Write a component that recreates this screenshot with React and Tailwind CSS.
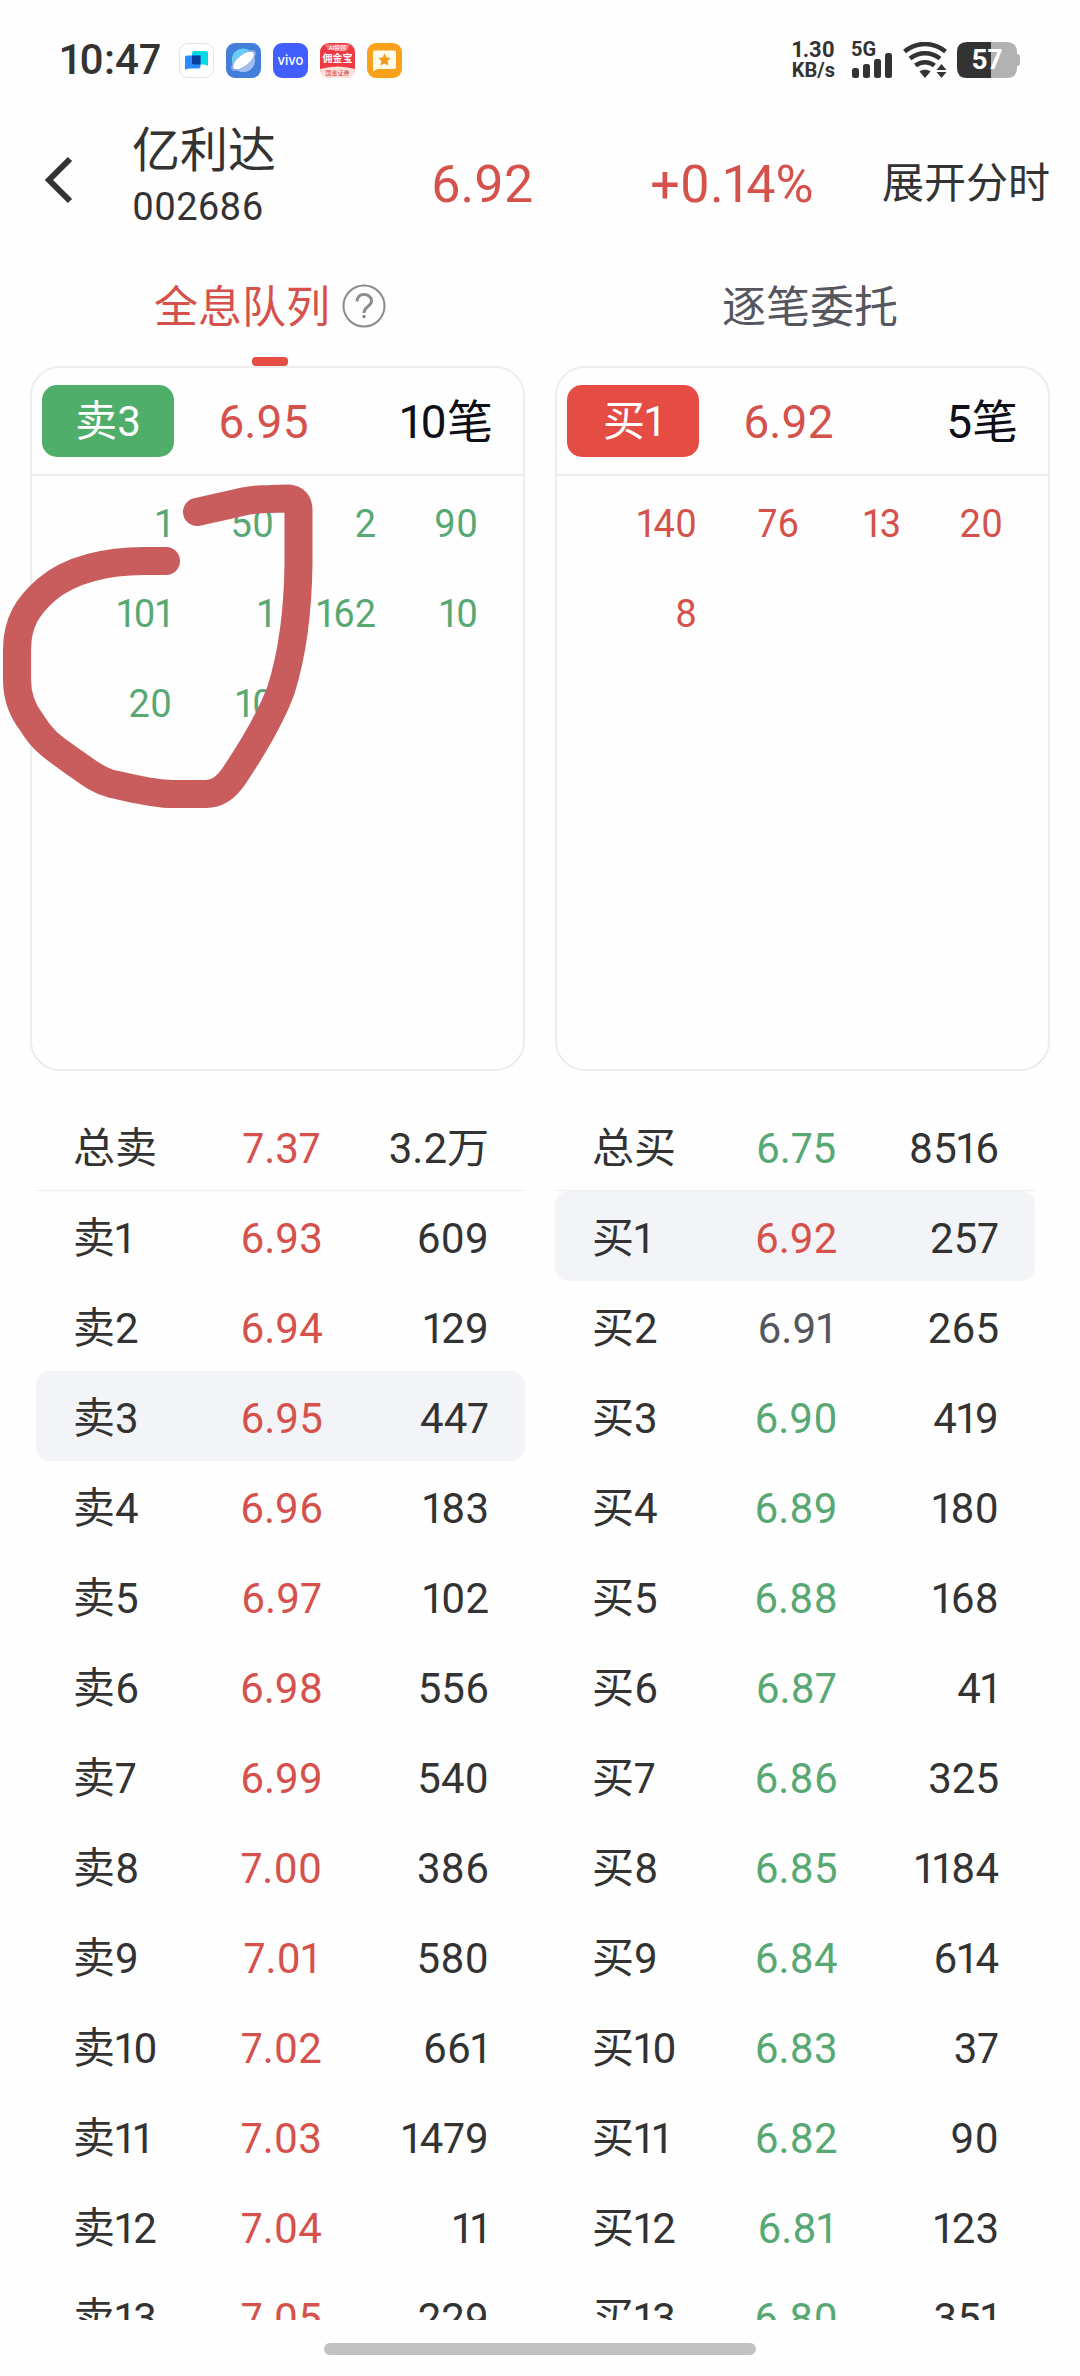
import { useState } from "react";

const RED = "text-[#d5524c]";
const GREEN = "text-[#57a873]";
const GRAY = "text-[#55565e]";

const sellQueue = [1, 50, 2, 90, 101, 1, 162, 10, 20, 10];
const buyQueue = [140, 76, 13, 20, 8];

const sells = [
  ["总卖", "7.37", "3.2万"],
  ["卖1", "6.93", "609"],
  ["卖2", "6.94", "129"],
  ["卖3", "6.95", "447"],
  ["卖4", "6.96", "183"],
  ["卖5", "6.97", "102"],
  ["卖6", "6.98", "556"],
  ["卖7", "6.99", "540"],
  ["卖8", "7.00", "386"],
  ["卖9", "7.01", "580"],
  ["卖10", "7.02", "661"],
  ["卖11", "7.03", "1479"],
  ["卖12", "7.04", "11"],
  ["卖13", "7.05", "229"],
];

const buys = [
  ["总买", "6.75", "8516"],
  ["买1", "6.92", "257"],
  ["买2", "6.91", "265"],
  ["买3", "6.90", "419"],
  ["买4", "6.89", "180"],
  ["买5", "6.88", "168"],
  ["买6", "6.87", "41"],
  ["买7", "6.86", "325"],
  ["买8", "6.85", "1184"],
  ["买9", "6.84", "614"],
  ["买10", "6.83", "37"],
  ["买11", "6.82", "90"],
  ["买12", "6.81", "123"],
  ["买13", "6.80", "351"],
];

// yesterday's close, prices are coloured against it
const PREV_CLOSE = 6.91;

function tone(price) {
  const p = Number(price);
  if (p > PREV_CLOSE) return RED;
  if (p < PREV_CLOSE) return GREEN;
  return GRAY;
}

export default function App() {
  const [tab, setTab] = useState("queue");

  return (
    <div className="h-screen flex flex-col overflow-hidden bg-[#fefefe] text-[#333333] proportional-nums font-['Roboto','Noto_Sans_CJK_SC',sans-serif]">
      <StatusBar />
      <Header />

      <div role="tablist" className="shrink-0 grid grid-cols-2 h-[120px]">
        <Tab active={tab === "queue"} onClick={() => setTab("queue")}>
          <span className="pt-[4px]">全息队列</span>
          <HelpIcon />
        </Tab>
        <Tab active={tab === "orders"} onClick={() => setTab("orders")}>
          <span className="pt-[4px]">逐笔委托</span>
        </Tab>
      </div>

      <main className="flex-1 min-h-0 overflow-hidden">
        <div className="grid grid-cols-2 gap-[30px] px-[30px]">
          <div className="relative">
            <QueueCard label="卖3" price="6.95" count="10笔" items={sellQueue} side="sell" />
            <Scribble />
          </div>
          <QueueCard label="买1" price="6.92" count="5笔" items={buyQueue} side="buy" />
        </div>

        <div className="mt-[30px] grid grid-cols-2 gap-[30px] px-[30px]">
          <div className="pl-[6px]">
            <BookTable rows={sells} selected="卖3" caption="卖盘" />
          </div>
          <div className="pr-[15px]">
            <BookTable rows={buys} selected="买1" caption="买盘" />
          </div>
        </div>
      </main>

      <div className="shrink-0 h-[56px] pt-[2px] flex items-center justify-center">
        <div className="w-2/5 h-[12px] rounded-full bg-[#c1c1c1]" />
      </div>
    </div>
  );
}

function Header() {
  return (
    <header className="shrink-0 h-[126px] px-[30px] grid grid-cols-[102px_225px_1fr_1fr_193px] items-center">
      <button aria-label="返回" className="pl-[14px] pb-[6px] h-full flex items-center">
        <svg viewBox="0 0 30 48" className="w-[30px] h-[48px]" fill="none">
          <path d="M26 3 5 24 26 45" stroke="#333333" strokeWidth="6" />
        </svg>
      </button>
      <div className="pb-[12px]">
        <h1 className="text-[48px] leading-[60px]">亿利达</h1>
        <p className="text-[38px] leading-[52px]">002686</p>
      </div>
      <span className={`pt-[4px] text-[52px] leading-[60px] text-center ${RED}`}>6.92</span>
      <span className={`pt-[4px] text-[52px] leading-[60px] text-center ${RED}`}>+0.14%</span>
      <button className="pt-[2px] text-[42px] leading-[60px] text-right whitespace-nowrap">展开分时</button>
    </header>
  );
}

function Tab({ active, onClick, children }) {
  return (
    <button
      role="tab"
      aria-selected={active}
      onClick={onClick}
      className={`relative flex items-center justify-center gap-[12px] text-[44px] leading-[60px] ${active ? RED : GRAY}`}
    >
      {children}
      {active && (
        <span className="absolute bottom-0 left-1/2 -translate-x-1/2 w-[36px] h-[9px] rounded-[4px] bg-[#e54c44]" />
      )}
    </button>
  );
}

function QueueCard({ label, price, count, items, side }) {
  const sell = side === "sell";
  return (
    <section className="h-[705px] rounded-[30px] border-2 border-[#ededed]">
      <div className="h-[108px] pl-[10px] pr-[30px] flex items-center border-b-2 border-[#ededed] text-[46px] leading-[60px]">
        <span
          className={`w-[132px] h-[72px] pt-[2px] rounded-[15px] flex items-center justify-center text-[42px] text-white ${sell ? "bg-[#50ae6b]" : "bg-[#e54c44]"}`}
        >
          {label}
        </span>
        <span className={`ml-[44px] pt-[2px] ${RED}`}>{price}</span>
        <span className="ml-auto pt-[2px] text-[#0f0f17]">{count}</span>
      </div>
      <ol className={`pt-[3px] pl-[38px] pr-[45px] grid grid-cols-4 text-right text-[38px] leading-[90px] ${sell ? GREEN : RED}`}>
        {items.map((n, i) => (
          <li key={i}>{n}</li>
        ))}
      </ol>
    </section>
  );
}

function BookTable({ rows, selected, caption }) {
  return (
    <table aria-label={caption} className="w-full table-fixed border-separate border-spacing-0 text-[42px] leading-[60px]">
      <tbody>
        {rows.map(([label, price, qty], i) => {
          const bg = label === selected ? "bg-[#f3f4f8]" : "";
          const line = i === 0 ? "border-b border-[#eeeeee]" : "";
          const left = i === 0 ? "" : "rounded-l-[14px]";
          const right = i === 0 ? "" : "rounded-r-[14px]";
          return (
            <tr key={label}>
              <th scope="row" className={`h-[90px] p-0 pt-[6px] pl-[37px] text-left font-normal ${left} ${bg} ${line}`}>
                {label}
              </th>
              <td className={`p-0 pt-[6px] pl-[2px] text-center ${tone(price)} ${bg} ${line}`}>{price}</td>
              <td className={`p-0 pt-[6px] pr-[36px] text-right ${right} ${bg} ${line}`}>{qty}</td>
            </tr>
          );
        })}
      </tbody>
    </table>
  );
}

// hand-drawn marker stroke over the sell queue
function Scribble() {
  return (
    <svg
      viewBox="0 366 330 454"
      className="absolute top-0 -left-[30px] w-[330px] h-[454px] pointer-events-none"
      fill="none"
      stroke="#c95d5d"
      strokeWidth="28"
      strokeLinecap="round"
      strokeLinejoin="round"
    >
      <path d="M197 512 L246 501 Q258 499 270 499 L288 498.500 Q298.500 499 298.500 510 L298.500 563 C298 610 292 655 281 690 C270 720 250 752 234 776 Q222 794 206 794 L172 794 C152 794 132 788 112 784 C96 780 84 769 72 761 C56 749 44 743 32 723 Q17 704 17 680 L17 650 C17 622 28 606 46 590 C70 569 108 561 144 561 L166 561" />
    </svg>
  );
}

function HelpIcon() {
  return (
    <svg viewBox="0 0 44 44" className="w-[44px] h-[44px]" fill="none" stroke="#8b8b90" strokeWidth="2">
      <circle cx="22" cy="22" r="20.500" />
      <path d="M15 17.500c0-4.500 3-7 7-7s7.500 2.500 7.500 6.500c0 5.500-7.500 5.500-7.500 12" strokeWidth="3" />
      <circle cx="22" cy="32.500" r="1.800" fill="#8b8b90" stroke="none" />
    </svg>
  );
}

function StatusBar() {
  return (
    <div className="shrink-0 h-[120px] pl-[60px] pr-[60px] flex items-center justify-between">
      <div className="flex items-center">
        <span className="w-[105px] text-[42px] leading-[48px] font-medium">10:47</span>
        <div className="ml-[14px] flex gap-[12px]">
          <ChatApp />
          <BrowserApp />
          <VivoApp />
          <BrokerApp />
          <StarApp />
        </div>
      </div>

      <div className="flex items-center">
        <div className="text-center font-bold leading-[20px]">
          <p className="text-[22px]">1.30</p>
          <p className="text-[20px]">KB/s</p>
        </div>
        <div className="relative ml-[16px] w-[42px] h-[36px]">
          <span className="absolute -top-[2px] left-0 text-[20px] leading-[18px] font-bold">5G</span>
          <svg viewBox="0 0 42 36" className="w-[42px] h-[36px]" fill="#333333">
            <rect x="1" y="26" width="7" height="10" rx="2.500" />
            <rect x="12" y="22" width="7" height="14" rx="2.500" />
            <rect x="23" y="17" width="7" height="19" rx="2.500" />
            <rect x="34" y="11" width="7" height="25" rx="2.500" />
          </svg>
        </div>
        <svg viewBox="0 0 44 36" className="ml-[10px] w-[44px] h-[36px]" fill="none" stroke="#333333" strokeWidth="4.500">
          <path d="M1.500 9.500C14 -.5 30 -.5 42.500 9.500" />
          <path d="M7 16.500c9-7 21-7 30 0" />
          <path d="M12.500 23.500c5.500-4.500 13.500-4.500 19 0" />
          <path d="M16.500 29.500c3-2.500 8-2.500 11 0L22 36Z" fill="#333333" stroke="none" />
          <path d="m38.500 22 5 6h-10ZM38.500 36l5-6h-10Z" fill="#333333" stroke="none" />
        </svg>
        <div className="relative ml-[10px]">
          <svg viewBox="0 0 63 36" className="w-[63px] h-[36px]">
            <path d="M10 0H34V36H10Q0 36 0 26V10Q0 0 10 0Z" fill="#333333" />
            <path d="M34 0H50Q60 0 60 10V12Q63 12 63 15V21Q63 24 60 24V26Q60 36 50 36H34Z" fill="#b2b2b2" />
          </svg>
          <span className="absolute inset-y-0 left-0 w-[60px] text-center text-[28px] leading-[36px] font-bold text-white">57</span>
        </div>
      </div>
    </div>
  );
}

function ChatApp() {
  return (
    <svg viewBox="0 0 35 35" className="w-[35px] h-[35px]">
      <rect x=".5" y=".5" width="34" height="34" rx="8.500" fill="#ffffff" stroke="#e4e4e4" />
      <path d="M15 8H27Q29 8 29 10V23Q27 21.500 25 21.500H15Q13 21.500 13 19.500V10Q13 8 15 8Z" fill="#06dbe3" />
      <path d="M8 12.500H21.500V23.500Q21.500 25.500 19.500 25.500H10Q7.500 25.500 6 27V14.500Q6 12.500 8 12.500Z" fill="#2a8bff" />
      <path d="M13 12.500H21.500V21.500H15Q13 21.500 13 19.500Z" fill="#0b3b9b" />
    </svg>
  );
}

function BrowserApp() {
  return (
    <svg viewBox="0 0 35 35" className="w-[35px] h-[35px]">
      <rect width="35" height="35" rx="9" fill="#417fdb" />
      <circle cx="17.500" cy="17.500" r="11.500" fill="#a3bff0" />
      <path d="M6.500 21A11.500 11.500 0 0 1 26 9.500Z" fill="#66cdf6" />
      <ellipse cx="17.500" cy="17.500" rx="15" ry="6" transform="rotate(-38 17.500 17.500)" fill="#86a9e6" />
      <ellipse cx="17.500" cy="17.500" rx="12.500" ry="5.500" transform="rotate(-38 17.500 17.500)" fill="#ffffff" />
    </svg>
  );
}

function VivoApp() {
  return (
    <svg viewBox="0 0 35 35" className="w-[35px] h-[35px]">
      <rect width="35" height="35" rx="9" fill="#415fff" />
      <text x="17.500" y="22" textAnchor="middle" fontSize="13" fontWeight="500" fill="#ffffff" className="font-['Inter',sans-serif]">
        vivo
      </text>
    </svg>
  );
}

function BrokerApp() {
  return (
    <svg viewBox="0 0 35 35" className="w-[35px] h-[35px]">
      <rect width="35" height="35" rx="9" fill="#ee3a42" />
      <path d="M0 26Q17.500 21 35 26Q35 35 26 35H9Q0 35 0 26Z" fill="#fbe3da" />
      <path d="M5 1.500H30L27 7H8Z" fill="#f77c7c" />
      <text x="17.500" y="6.500" textAnchor="middle" fontSize="6" fill="#ffffff">AI投顾</text>
      <text x="17.500" y="19" textAnchor="middle" fontSize="10" fontWeight="700" fill="#ffffff">佣金宝</text>
      <text x="17.500" y="32" textAnchor="middle" fontSize="6" fill="#d8403f">国金证券</text>
    </svg>
  );
}

function StarApp() {
  return (
    <svg viewBox="0 0 35 35" className="w-[35px] h-[35px]">
      <rect width="35" height="35" rx="9" fill="#f9a11b" />
      <path d="M8 7.500H27Q29 7.500 29 9.500V24Q29 26 27 26H10.500L6 28.500V9.500Q6 7.500 8 7.500Z" fill="#fffbea" />
      <path d="m17.500 10.500 1.900 4 4.400.6-3.200 3 .8 4.400-3.900-2.100-3.900 2.100.8-4.400-3.200-3 4.400-.6Z" fill="#f09a18" />
    </svg>
  );
}
